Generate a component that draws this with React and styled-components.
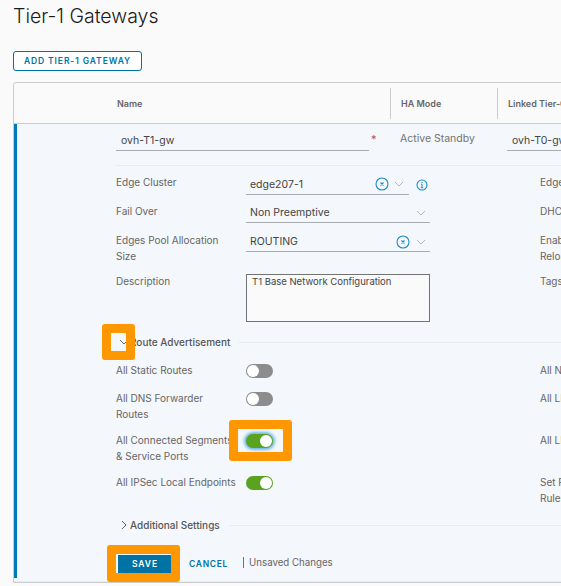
import React from "react";
import styled, { createGlobalStyle } from "styled-components";

const GlobalStyle = createGlobalStyle`
  html, body {
    margin: 0;
    height: 100%;
    overflow: hidden;
    background: #fafafa;
    font-family: Inter, "Liberation Sans", sans-serif;
  }
`;

const Page = styled.div`
  position: relative;
  width: 561px;
  height: 586px;
  overflow: hidden;
  padding: 4px 0 0 13px;
  box-sizing: border-box;
`;

const Title = styled.h1`
  margin: 0;
  height: 47px;
  font-size: 19.5px;
  line-height: 24px;
  font-weight: 300;
  color: #1b1b1b;
`;

const AddButton = styled.button`
  display: block;
  width: 129px;
  height: 20px;
  padding: 0;
  border: 1px solid #0072a3;
  border-radius: 3px;
  background: #fff;
  color: #0072a3;
  font: 600 8.5px Inter, sans-serif;
  letter-spacing: 0.9px;
`;

const Table = styled.div`
  width: 640px;
  margin-top: 11px;
  border: 1px solid #ccc;
  border-radius: 3px 0 0 0;
  background: #fafafa;
`;

const HeadRow = styled.div`
  display: grid;
  grid-template-columns: 376px 107px 1fr;
  height: 40px;
  border-bottom: 1px solid #ccc;
  align-items: center;
`;

const HeadCell = styled.div`
  height: 31px;
  margin-top: 1px;
  display: flex;
  align-items: center;
  padding-left: ${({ $first }) => ($first ? "103px" : "10px")};
  border-left: ${({ $first }) => ($first ? "none" : "1px solid #ccc")};
  font-size: 9px;
  font-weight: 600;
  color: #666;
`;

const Body = styled.div`
  border-left: 3px solid #0079b8;
  background: #f4f7fb;
  padding-left: 99px;
  height: 454px;
`;

const TopRow = styled.div`
  display: grid;
  grid-template-columns: 253px 31px 107px 1fr;
  height: 41px;
  border-bottom: 1px solid #e8ecef;
`;

const Field = styled.div`
  display: flex;
  align-items: center;
  box-sizing: border-box;
  height: ${({ $h }) => $h || 20}px;
  width: ${({ $w }) => ($w ? `${$w}px` : "auto")};
  margin-top: ${({ $top }) => $top || 0}px;
  padding-left: ${({ $pad }) => $pad ?? 5}px;
  border-bottom: 1px solid #a8adb2;
  font-size: 10.5px;
  color: #444;
`;

const Asterisk = styled.span`
  margin-top: 8px;
  padding-left: 2px;
  color: #c25248;
  font-size: 11px;
`;

const Muted = styled.span`
  margin-top: 7px;
  font-size: 10.5px;
  line-height: 16px;
  color: #737373;
`;

const Details = styled.div`
  display: grid;
  grid-template-columns: 130px 294px 1fr;
  grid-template-rows: 29px 29px 41px 55px;
  padding-top: 8px;
`;

const Label = styled.div`
  font-size: 10px;
  line-height: 16px;
  color: #666;
  white-space: pre-line;
`;

const Control = styled.div`
  display: flex;
  align-items: flex-start;
  width: 184px;
`;

const Grow = styled.span`
  flex: 1;
`;

const IconSlot = styled.span`
  display: inline-flex;
  margin-left: ${({ $gap }) => $gap || 0}px;
  margin-top: ${({ $top }) => $top || 0}px;
`;

const TextArea = styled.div`
  box-sizing: border-box;
  width: 184px;
  height: 48px;
  margin-top: 1px;
  padding: 0 5px;
  border: 1px solid #737373;
  background: #fafafa;
  font-size: 9.5px;
  line-height: 14px;
  color: #444;
`;

const Section = styled.div`
  display: flex;
  align-items: center;
  gap: 1px;
  height: 16px;
  margin: ${({ $top }) => $top} 0 0 3px;
`;

const SectionTitle = styled.span`
  font-size: 10px;
  font-weight: 500;
  color: #565656;
  white-space: nowrap;
`;

const Rule = styled.span`
  flex: 1;
  height: 1px;
  background: #e8ecef;
  margin-left: 8px;
`;

const Toggles = styled.div`
  display: grid;
  grid-template-columns: 130px 294px 1fr;
  grid-template-rows: 28px 42px 42px 43px;
  padding-top: 12px;
`;

const Toggle = styled.span`
  display: block;
  position: relative;
  box-sizing: border-box;
  width: 27px;
  height: 14px;
  margin-top: 2px;
  border-radius: 7px;
  background: ${({ $on }) => ($on ? "#5aa220" : "#8c8c8c")};
  box-shadow: ${({ $focus }) => ($focus ? "0 0 3px 2px #6bb8e6" : "none")};

  &::after {
    content: "";
    position: absolute;
    top: 1px;
    left: ${({ $on }) => ($on ? "14px" : "1px")};
    width: 12px;
    height: 12px;
    border-radius: 50%;
    background: #fff;
  }
`;

const Actions = styled.div`
  display: flex;
  align-items: center;
  height: 38px;
  margin-top: 12px;
  margin-left: 1px;
`;

const FootLine = styled.div`
  height: 3px;
  background: #f4f7fb;
  border-bottom: 1px solid #e8ecef;
`;

const SaveButton = styled.button`
  width: 55px;
  height: 19px;
  padding: 0;
  border: none;
  border-left: 1px solid #fff;
  background: #0072a3;
  color: #fff;
  font: 600 8.5px Inter, sans-serif;
  letter-spacing: 0.9px;
`;

const LinkButton = styled.button`
  margin-left: 17px;
  padding: 0;
  border: none;
  background: none;
  color: #0072a3;
  font: 600 8.5px Inter, sans-serif;
  letter-spacing: 0.7px;
`;

const Unsaved = styled.span`
  margin: -3px 0 0 15px;
  padding-left: 5px;
  border-left: 1px solid #c25248;
  font-size: 9.7px;
  line-height: 11px;
  color: #666;
`;

const Highlight = styled.span`
  position: absolute;
  box-sizing: border-box;
  left: ${({ $x }) => $x}px;
  top: ${({ $y }) => $y}px;
  width: ${({ $w }) => $w}px;
  height: ${({ $h }) => $h}px;
  border: 9px solid #ff9800;
  border-radius: 3px;
`;

const Chevron = ({ dir = "down", color = "#b5b9bd", size = 10 }) => (
  <svg width={size} height={size} viewBox="0 0 10 10" fill="none" stroke={color} strokeWidth="1">
    <path d={dir === "down" ? "M1 3l4 4 4-4" : "M3 1l4 4-4 4"} />
  </svg>
);

const ClearIcon = () => (
  <svg width="14" height="14" viewBox="0 0 14 14" fill="none" stroke="#1d8cc9">
    <circle cx="7" cy="7" r="6" strokeWidth="1.1" />
    <path d="M5.5 5.5l3 3M8.5 5.5l-3 3" strokeWidth="1.2" />
  </svg>
);

const InfoIcon = () => (
  <svg width="12" height="12" viewBox="0 0 12 12" fill="none" stroke="#1d8cc9">
    <circle cx="6" cy="6" r="5" strokeWidth="1.1" />
    <path d="M6 5.2v3.4M4.8 8.7h2.4M4.9 5.2H6" strokeWidth="1" />
    <path d="M6 3v1" strokeWidth="1.2" />
  </svg>
);

const App = () => (
  <>
    <GlobalStyle />
    <Page>
      <Title>Tier-1 Gateways</Title>
      <AddButton>ADD TIER-1 GATEWAY</AddButton>
      <Table>
        <HeadRow>
          <HeadCell $first>Name</HeadCell>
          <HeadCell>HA Mode</HeadCell>
          <HeadCell>Linked Tier-0 Gateway</HeadCell>
        </HeadRow>
        <Body>
          <TopRow>
            <Field $top={7} $h={20}>ovh-T1-gw</Field>
            <Asterisk>*</Asterisk>
            <Muted>Active Standby</Muted>
            <Field $top={7} $h={20}>ovh-T0-gw</Field>
          </TopRow>
          <Details>
            <Label>Edge Cluster</Label>
            <Control>
              <Field $w={163} $pad={4} $h={21}>
                edge207-1
                <Grow />
                <ClearIcon />
                <IconSlot $gap={5}><Chevron /></IconSlot>
                <IconSlot $gap={5} />
              </Field>
              <IconSlot $gap={7} $top={5}><InfoIcon /></IconSlot>
            </Control>
            <Label>Edge</Label>
            <Label>Fail Over</Label>
            <Control>
              <Field $w={184} $pad={4}>
                Non Preemptive
                <Grow />
                <IconSlot><Chevron /></IconSlot>
                <IconSlot $gap={4} />
              </Field>
            </Control>
            <Label>DHCP</Label>
            <Label>{"Edges Pool Allocation\nSize"}</Label>
            <Control>
              <Field $w={184} $pad={4}>
                ROUTING
                <Grow />
                <ClearIcon />
                <IconSlot $gap={6}><Chevron /></IconSlot>
                <IconSlot $gap={4} />
              </Field>
            </Control>
            <Label>{"Enable\nReload"}</Label>
            <Label>Description</Label>
            <TextArea>T1 Base Network Configuration</TextArea>
            <Label>Tags</Label>
          </Details>
          <Section $top="6px">
            <Chevron color="#666" />
            <SectionTitle>Route Advertisement</SectionTitle>
            <Rule />
          </Section>
          <Toggles>
            <Label>All Static Routes</Label>
            <Toggle />
            <Label>All NAT</Label>
            <Label>{"All DNS Forwarder\nRoutes"}</Label>
            <Toggle />
            <Label>All LB</Label>
            <Label>{"All Connected Segments\n& Service Ports"}</Label>
            <Toggle $on $focus />
            <Label>All LB</Label>
            <Label>All IPSec Local Endpoints</Label>
            <Toggle $on />
            <Label>{"Set Route\nRules"}</Label>
          </Toggles>
          <Section $top="0">
            <Chevron dir="right" color="#666" />
            <SectionTitle>Additional Settings</SectionTitle>
            <Rule />
          </Section>
          <Actions>
            <SaveButton>SAVE</SaveButton>
            <LinkButton>CANCEL</LinkButton>
            <Unsaved>Unsaved Changes</Unsaved>
          </Actions>
        </Body>
        <FootLine />
      </Table>
      <Highlight $x={102} $y={324} $w={33} $h={36} />
      <Highlight $x={229} $y={420} $w={63} $h={41} />
      <Highlight $x={107} $y={545} $w={73} $h={37} />
    </Page>
  </>
);

export default App;
